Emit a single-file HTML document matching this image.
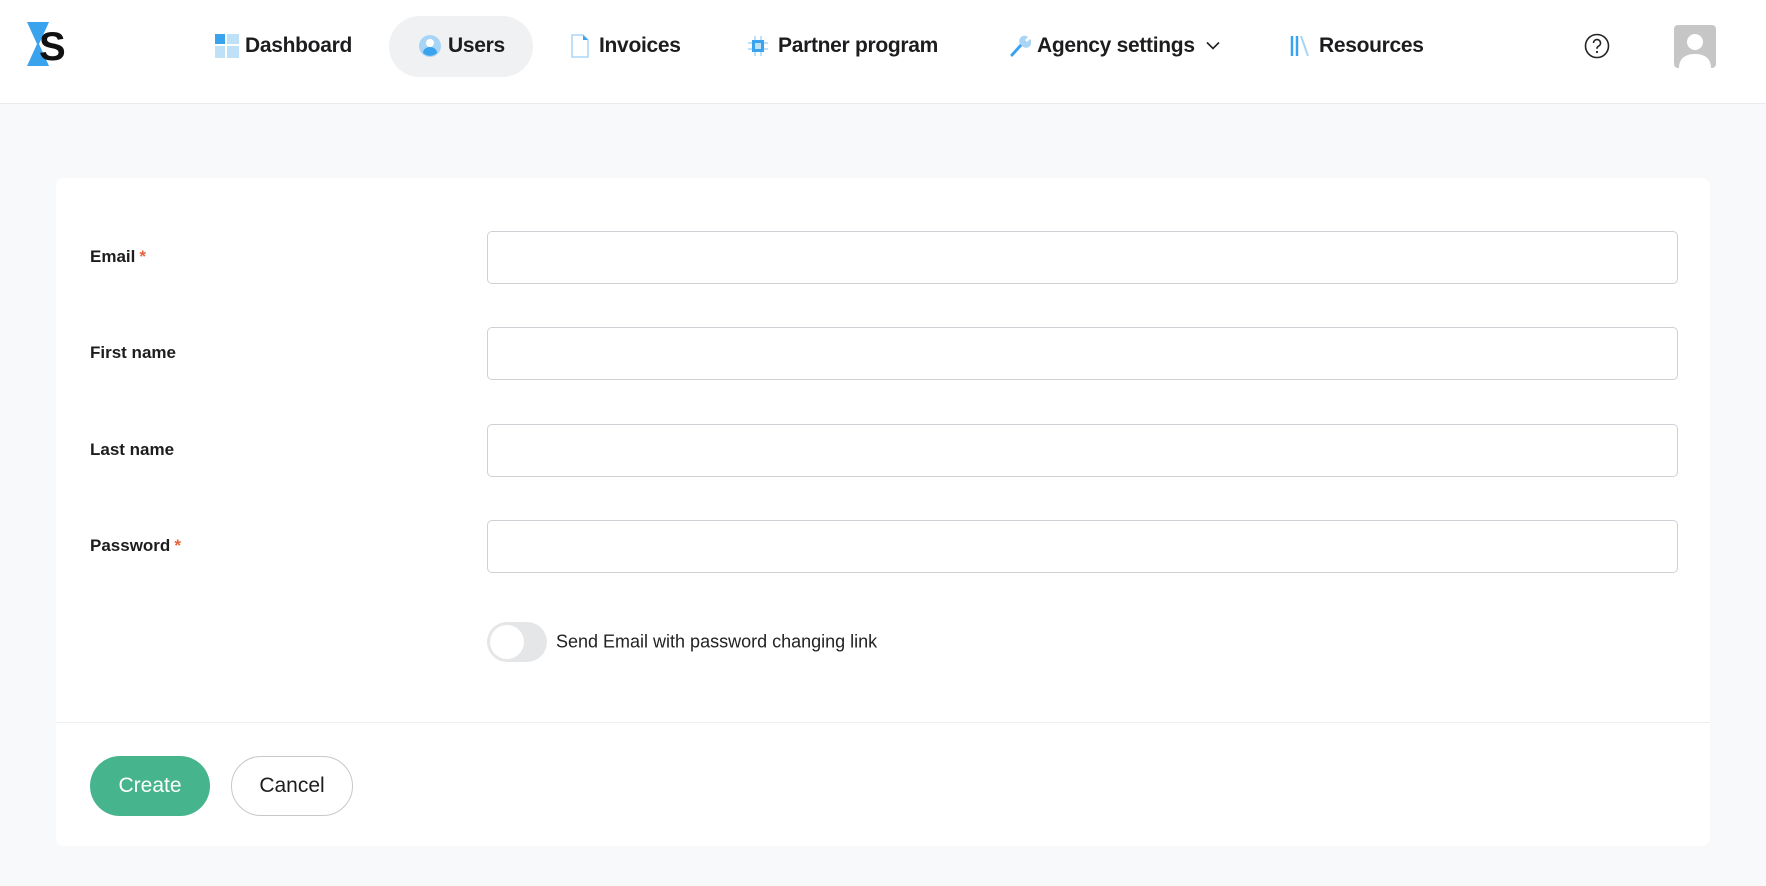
<!DOCTYPE html>
<html><head><meta charset="utf-8"><style>
*{box-sizing:border-box;margin:0;padding:0}
body{width:1766px;height:886px;background:#f8f9fa;font-family:"Liberation Sans",sans-serif;color:#1d1d1f;position:relative;overflow:hidden}
.hdr{position:absolute;left:0;top:0;width:1766px;height:104px;background:#fff;border-bottom:1px solid #e9ecef}
.nav{position:absolute;top:46px;transform:translateY(-50%);font-size:21px;font-weight:bold;letter-spacing:-0.3px;white-space:nowrap}
.ic{position:absolute;top:46px;transform:translateY(-50%)}
.pill{position:absolute;left:389px;top:16px;width:144px;height:61px;border-radius:31px;background:#eff1f3}
.card{position:absolute;left:56px;top:178px;width:1654px;height:668px;background:#fff;border-radius:8px}
.lbl{position:absolute;left:90px;font-size:17px;font-weight:bold;transform:translateY(-50%)}
.lbl span{color:#e8623a;margin-left:4px}
.inp{position:absolute;left:487px;width:1191px;height:53px;border:1px solid #cdd1d5;border-radius:5px;background:#fff}
.btn{position:absolute;top:756px;height:60px;border-radius:30px;font-size:21px;display:flex;align-items:center;justify-content:center}
</style></head><body>
<div class="hdr">
<svg style="position:absolute;left:25px;top:22px" width="42" height="44" viewBox="0 0 42 44"><path d="M2 0H24L14 22L24 44H2L12 22Z" fill="#3aa3ee"/><text x="14" y="38" font-family="Liberation Sans" font-weight="bold" font-size="40" fill="#111">S</text></svg>
<div class="pill"></div>
<svg class="ic" style="left:215px" width="24" height="24" viewBox="0 0 24 24"><rect x="0" y="0" width="10" height="10" fill="#3aa3ee"/><rect x="12" y="0" width="12" height="10" fill="#bfe1f8"/><rect x="0" y="12" width="10" height="12" fill="#bfe1f8"/><rect x="12" y="12" width="12" height="12" fill="#bfe1f8"/></svg>
<div class="nav" style="left:245px">Dashboard</div>
<svg class="ic" style="left:419px" width="22" height="22" viewBox="0 0 22 22"><circle cx="11" cy="11" r="11" fill="#a8d5f5"/><circle cx="11" cy="8" r="4" fill="#fff"/><path d="M4 18a7 6 0 0 1 14 0a10 10 0 0 1-14 0z" fill="#3aa3ee"/></svg>
<div class="nav" style="left:448px">Users</div>
<svg class="ic" style="left:571px" width="18" height="24" viewBox="0 0 18 24"><path d="M1 1H12L17 6V23H1Z" fill="#fff" stroke="#a8d5f5" stroke-width="1.5"/><path d="M12 1V6H17" fill="#3aa3ee"/></svg>
<div class="nav" style="left:599px">Invoices</div>
<svg class="ic" style="left:748px" width="20" height="22" viewBox="0 0 20 22"><rect x="4" y="5" width="12" height="12" fill="#3aa3ee"/><rect x="7" y="8" width="6" height="6" fill="#bfe1f8"/><path d="M7 1v4M13 1v4M7 17v4M13 17v4M0 8h4M0 14h4M16 8h4M16 14h4" stroke="#a8d5f5" stroke-width="1.5"/></svg>
<div class="nav" style="left:778px">Partner program</div>
<svg class="ic" style="left:1009px" width="22" height="22" viewBox="0 0 22 22"><path d="M3 20L12 10" stroke="#3aa3ee" stroke-width="3" stroke-linecap="round"/><path d="M12 10a5 5 0 0 1 7-8l-3 3 2 2 3-3a5 5 0 0 1-8 7" fill="#a8d5f5"/></svg>
<div class="nav" style="left:1037px">Agency settings</div>
<svg class="ic" style="left:1206px" width="14" height="9" viewBox="0 0 14 9"><path d="M1 1l6 6 6-6" fill="none" stroke="#222" stroke-width="1.6"/></svg>
<svg class="ic" style="left:1289px" width="22" height="22" viewBox="0 0 22 22"><path d="M3 1v20M8 1v20" stroke="#3aa3ee" stroke-width="2.5"/><path d="M12 1l7 20" stroke="#a8d5f5" stroke-width="2"/></svg>
<div class="nav" style="left:1319px">Resources</div>
<svg class="ic" style="left:1584px" width="26" height="26" viewBox="0 0 26 26"><circle cx="13" cy="13" r="11.5" fill="none" stroke="#222" stroke-width="1.6"/><path d="M9.5 10a3.5 3.5 0 1 1 5 3.2c-1 .5-1.5 1.2-1.5 2.5" fill="none" stroke="#222" stroke-width="1.6"/><circle cx="13" cy="19" r="1.1" fill="#222"/></svg>
<svg style="position:absolute;left:1674px;top:25px" width="42" height="43" viewBox="0 0 42 43"><rect width="42" height="43" rx="4" fill="#c6c6c6"/><circle cx="21" cy="17" r="8" fill="#fff"/><path d="M5 43c0-10 7-14 16-14s16 4 16 14z" fill="#fff"/></svg>
</div>
<div class="card"></div>
<div class="lbl" style="top:257px">Email<span>*</span></div>
<div class="lbl" style="top:353px">First name</div>
<div class="lbl" style="top:450px">Last name</div>
<div class="lbl" style="top:546px">Password<span>*</span></div>
<div class="inp" style="top:231px"></div>
<div class="inp" style="top:327px"></div>
<div class="inp" style="top:424px"></div>
<div class="inp" style="top:520px"></div>
<div style="position:absolute;left:487px;top:622px;width:60px;height:40px;border-radius:20px;background:#e4e6e8"><div style="position:absolute;left:3px;top:3px;width:34px;height:34px;border-radius:50%;background:#fff"></div></div>
<div style="position:absolute;left:556px;top:642px;transform:translateY(-50%);font-size:18px;color:#222">Send Email with password changing link</div>
<div style="position:absolute;left:56px;top:722px;width:1654px;height:1px;background:#eceef0"></div>
<div class="btn" style="left:90px;width:120px;background:#46b48c;color:#fff">Create</div>
<div class="btn" style="left:231px;width:122px;border:1px solid #c8c8c8;background:#fff;color:#1d1d1f">Cancel</div>
</body></html>
